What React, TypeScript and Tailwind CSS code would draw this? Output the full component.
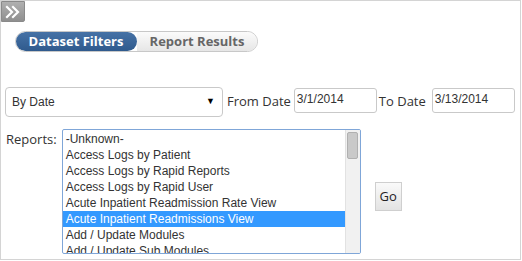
import React from 'react';

const reports = [
  '-Unknown-',
  'Access Logs by Patient',
  'Access Logs by Rapid Reports',
  'Access Logs by Rapid User',
  'Acute Inpatient Readmission Rate View',
  'Acute Inpatient Readmissions View',
  'Add / Update Modules',
  'Add / Update Sub Modules',
];

const selected = 'Acute Inpatient Readmissions View';

export default function App() {
  return (
    <div className="w-[522px] h-[261px] bg-white font-['Open_Sans',sans-serif] text-[#333]">
      <div className="w-[521px] h-[260px] border border-[#d4d4d4] flex flex-col">
        {/* sidebar toggle */}
        <div className="w-[24px] h-[21px] bg-gradient-to-b from-[#b0b0b0] to-[#8f8f8f] border border-[#8a8a8a] rounded-br-[2px] flex items-center justify-center">
          <svg width="16" height="14" viewBox="0 0 16 14" fill="none" stroke="white" strokeWidth="2.2" strokeLinecap="square">
            <path d="M2 2 L7 7 L2 12" />
            <path d="M8 2 L13 7 L8 12" />
          </svg>
        </div>

        {/* tabs */}
        <div className="ml-[14px] mt-[9px] flex h-[21px] w-[243px] rounded-full border border-[#c8c8c8] overflow-hidden text-[13px] font-bold leading-none">
          <div className="w-[122px] bg-gradient-to-b from-[#4672a6] to-[#2f5a8d] text-white flex items-center justify-center rounded-full -ml-px">
            Dataset Filters
          </div>
          <div className="flex-1 bg-gradient-to-b from-[#fbfbfb] to-[#e6e6e6] text-[#666] flex items-center justify-center">
            Report Results
          </div>
        </div>

        {/* date filter row */}
        <div className="mt-[35px] ml-[4px] flex items-center text-[13px]">
          <div className="w-[218px] h-[30px] border border-[#c9c9c9] rounded-[4px] flex items-center justify-between pl-[6px] pr-[7px] font-['Liberation_Sans',Arial,sans-serif] text-[12px] text-[#333]">
            <span>By Date</span>
            <span className="text-[9px] text-black">▼</span>
          </div>
          <span className="ml-[4px]">From Date</span>
          <div className="ml-[3px] w-[83px] h-[25px] -mt-[4px] border border-[#c9c9c9] rounded-[3px] px-[2px] pt-[4px] font-['Liberation_Sans',Arial,sans-serif] text-[12px] leading-none text-[#333]">
            3/1/2014
          </div>
          <span className="ml-[2px]">To Date</span>
          <div className="ml-[6px] w-[83px] h-[25px] -mt-[4px] border border-[#c9c9c9] rounded-[3px] px-[2px] pt-[4px] font-['Liberation_Sans',Arial,sans-serif] text-[12px] leading-none text-[#333]">
            3/13/2014
          </div>
        </div>

        {/* reports row */}
        <div className="mt-[12px] ml-[5px] flex items-start text-[13px]">
          <span className="mt-[1px]">Reports:</span>
          <div className="ml-[5px] w-[299px] h-[125px] border border-[#7fa6d8] rounded-[2px] flex overflow-hidden">
            <div className="flex-1 pt-px font-['Liberation_Sans',Arial,sans-serif] text-[12px] text-[#333]">
              {reports.map((r) => (
                <div
                  key={r}
                  className={
                    r === selected
                      ? 'h-[16px] leading-[16px] pl-[3px] bg-[#3399ff] text-white'
                      : 'h-[16px] leading-[16px] pl-[3px]'
                  }
                >
                  {r}
                </div>
              ))}
            </div>
            <div className="w-[15px] bg-[#f1f1f1] border-l border-[#e2e2e2] pt-[2px] flex justify-center">
              <div className="w-[11px] h-[27px] bg-[#c9c9c9] border border-[#b0b0b0] rounded-[2px]" />
            </div>
          </div>
          <div className="ml-[14px] mt-[53px] w-[27px] h-[29px] border border-[#cfcfcf] bg-gradient-to-b from-[#fafafa] to-[#e3e3e3] flex items-center justify-center text-[13px] text-[#222]">
            Go
          </div>
        </div>
      </div>
    </div>
  );
}
